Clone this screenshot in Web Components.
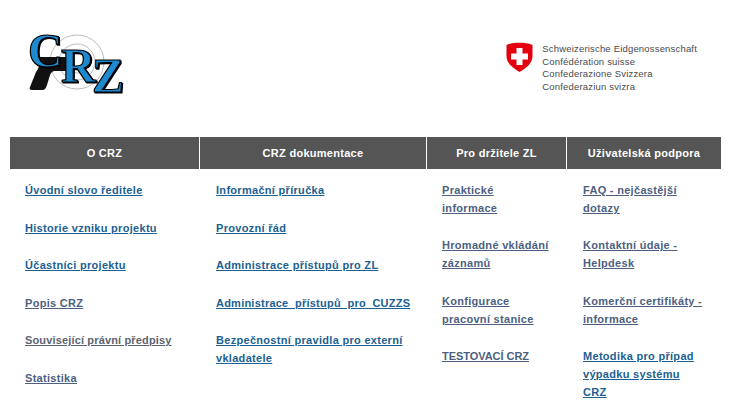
<!DOCTYPE html>
<html>
<head>
<meta charset="utf-8">
<style>
  html, body { margin: 0; background: #fff; overflow: hidden; }
  body { height: 411px; font-family: "Liberation Sans", Arial, sans-serif; }
</style>
</head>
<body>
<crz-page>
  <crz-header></crz-header>
  <crz-menu>
    <crz-column title="O CRZ" style="--w:189px;--pad:15px;--right:10px;--gap:19.6px">
      <crz-link>Úvodní slovo ředitele</crz-link>
      <crz-link>Historie vzniku projektu</crz-link>
      <crz-link>Účastníci projektu</crz-link>
      <crz-link tone="slate">Popis CRZ</crz-link>
      <crz-link tone="gray">Související právní předpisy</crz-link>
      <crz-link tone="slate">Statistika</crz-link>
    </crz-column>
    <crz-column title="CRZ dokumentace" style="--w:226px;--pad:16px;--right:10px;--gap:19.6px">
      <crz-link>Informační příručka</crz-link>
      <crz-link>Provozní řád</crz-link>
      <crz-link>Administrace přístupů pro ZL</crz-link>
      <crz-link style="white-space:nowrap;letter-spacing:.23px">Administrace&nbsp; přístupů&nbsp; pro&nbsp; CUZZS</crz-link>
      <crz-link>Bezpečnostní pravidla pro externí vkladatele</crz-link>
    </crz-column>
    <crz-column title="Pro držitele ZL" style="--w:139px;--pad:15px;--right:15px;--gap:19.4px">
      <crz-link tone="slate">Praktické informace</crz-link>
      <crz-link tone="slate">Hromadné vkládání záznamů</crz-link>
      <crz-link tone="slate">Konfigurace pracovní stanice</crz-link>
      <crz-link tone="slate" style="letter-spacing:-.05px">TESTOVACÍ CRZ</crz-link>
    </crz-column>
    <crz-column title="Uživatelská podpora" style="--w:154px;--pad:16px;--right:16px;--gap:19.4px">
      <crz-link tone="slate">FAQ - nejčastější dotazy</crz-link>
      <crz-link tone="slate">Kontaktní údaje - Helpdesk</crz-link>
      <crz-link tone="slate">Komerční certifikáty - informace</crz-link>
      <crz-link>Metodika pro případ výpadku systému CRZ</crz-link>
    </crz-column>
  </crz-menu>
</crz-page>
<script>
class CrzPage extends HTMLElement {
  constructor() {
    super()
    this.attachShadow({ mode: "open" })
    this.shadowRoot.innerHTML = `
      <style>
        :host { display: block; width: 738px; height: 411px; overflow: hidden; }
      </style>
      <slot></slot>`
  }
}

class CrzHeader extends HTMLElement {
  constructor() {
    super()
    this.attachShadow({ mode: "open" })
    this.shadowRoot.innerHTML = `
      <style>
        :host { display: flex; justify-content: space-between; align-items: flex-start; height: 137px; padding: 0 41px 0 26px; box-sizing: border-box; }
        .logo { margin-top: 20px; display: block; }
        .letters { font: 700 48px "Liberation Serif", serif; fill: #1d8ad0; stroke: #000; stroke-width: 1.2px; filter: drop-shadow(1px 1px 0 #000); }
        .fed { display: flex; margin-top: 42px; gap: 9px; }
        .shield { display: block; }
        .names { font: 9.5px/12.6px "Liberation Sans", sans-serif; letter-spacing: .18px; color: #4a4a4a; margin-top: 1px; }
      </style>
      <svg class="logo" width="100" height="84" viewBox="0 -8 100 84">
        <g fill="none" stroke="#bdbdbd">
          <circle cx="51" cy="34" r="11"/><circle cx="51" cy="34" r="18"/><circle cx="51" cy="34" r="27"/>
        </g>
        <path d="M14 29h30v14H29c-3 0-4 2-5 4l-3 10c-1 3-2 5-5 5H6c-2 0-3-1-2-3l6-15c2-3 3-5 3-7z" fill="#111"/>
        <g class="letters">
          <text x="2" y="39">C</text>
          <text x="35" y="54">R</text>
          <text x="66" y="64">Z</text>
        </g>
      </svg>
      <div class="fed">
        <svg class="shield" width="27" height="30" viewBox="0 0 27 30">
          <path d="M.5 3C5 1 9 .7 13.5 .7S22 1 26.500 3v11c0 7-6 12-13 16C6.500 26 .5 21 .5 14z" fill="#e3000f"/>
          <path d="M10.500 6h6v5.500h5.500v6h-5.500v5.500h-6v-5.500H5v-6h5.500z" fill="#fff"/>
        </svg>
        <div class="names">Schweizerische Eidgenossenschaft<br>Confédération suisse<br>Confederazione Svizzera<br>Confederaziun svizra</div>
      </div>`
  }
}

class CrzMenu extends HTMLElement {
  constructor() {
    super()
    this.attachShadow({ mode: "open" })
    this.shadowRoot.innerHTML = `
      <style>
        :host { display: flex; margin-left: 10px; gap: 1px; align-items: flex-start; }
      </style>
      <slot></slot>`
  }
}

class CrzColumn extends HTMLElement {
  constructor() {
    super()
    this.attachShadow({ mode: "open" })
    this.shadowRoot.innerHTML = `
      <style>
        :host { display: block; width: var(--w); }
        .head { height: 32px; background: #555; color: #fff; font: bold 11px/32px "Liberation Sans", sans-serif; text-align: center; letter-spacing: .28px; }
        .list { display: flex; flex-direction: column; gap: var(--gap); padding: 12px var(--right) 0 var(--pad); }
      </style>
      <div class="head"></div>
      <div class="list"><slot></slot></div>`
  }
  connectedCallback() {
    this.shadowRoot.querySelector(".head").textContent = this.getAttribute("title")
  }
}

class CrzLink extends HTMLElement {
  constructor() {
    super()
    this.attachShadow({ mode: "open" })
    this.shadowRoot.innerHTML = `
      <style>
        :host { display: block; font: bold 11px/18px "Liberation Sans", sans-serif; letter-spacing: .3px; color: #1c5f92; }
        :host([tone="slate"]) { color: #4d5f80; }
        :host([tone="gray"]) { color: #5c6470; letter-spacing: .15px; }
        a { color: inherit; text-decoration: underline; cursor: pointer; }
      </style>
      <a><slot></slot></a>`
  }
}

customElements.define("crz-page", CrzPage)
customElements.define("crz-header", CrzHeader)
customElements.define("crz-menu", CrzMenu)
customElements.define("crz-column", CrzColumn)
customElements.define("crz-link", CrzLink)
</script>
</body>
</html>
